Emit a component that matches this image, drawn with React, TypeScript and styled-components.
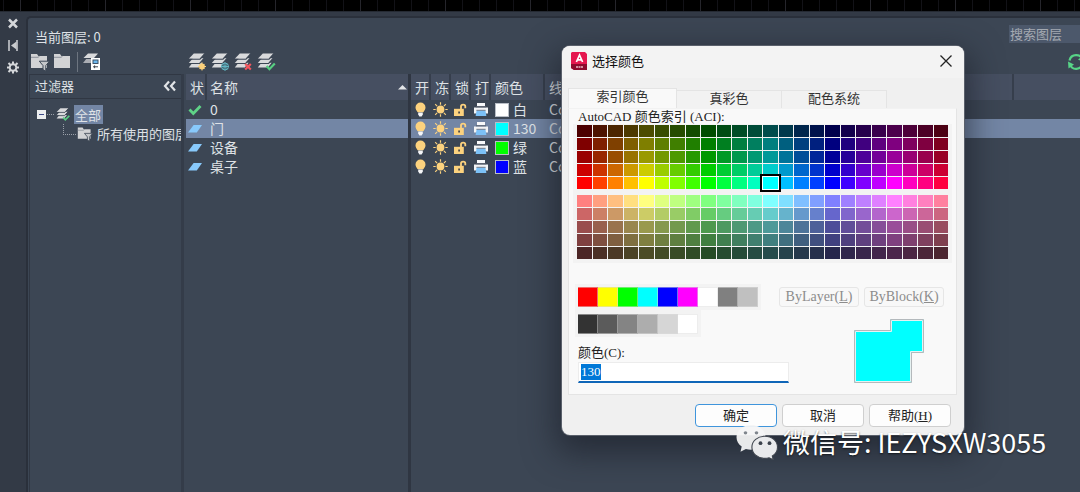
import React, { useEffect, useRef } from "react";
import styled, { createGlobalStyle } from "styled-components";

const ui = `"Noto Sans CJK SC", "Noto Sans", sans-serif`;
const dialogFont = `"Liberation Serif", "Noto Sans CJK SC", serif`;

const GlobalStyle = createGlobalStyle`
  * { box-sizing: border-box; }
  body { margin: 0; background: #3c4654; font-family: ${ui}; }
  button, input { font-family: inherit; margin: 0; }
  svg { flex: none; }
`;

const Page = styled.div`
  position: relative;
  display: flex;
  flex-direction: column;
  min-height: 100vh;
  overflow: hidden;
  color: #dfe2e6;
`;

const CanvasStrip = styled.div`
  height: 11px;
  background:
    repeating-linear-gradient(90deg, transparent 0 20px, #25252b 20px 21px, transparent 21px 85px),
    repeating-linear-gradient(90deg, transparent 0 3px, #121217 3px 4px, transparent 4px 17px),
    #000;
`;

const Manager = styled.div`
  flex: 1;
  display: flex;
  padding-top: 4px;
  background: #333a46;
  border-top: 1px solid #252a33;
`;

const Rail = styled.nav`
  width: 26px;
  display: flex;
  flex-direction: column;
  align-items: center;
  gap: 8px;
`;

const IconButton = styled.button`
  display: flex;
  align-items: center;
  justify-content: center;
  padding: 0;
  border: 0;
  background: none;
  color: inherit;
  flex: none;
`;

const Main = styled.main`
  flex: 1;
  min-width: 0;
  display: flex;
  flex-direction: column;
  background: #3c4654;
  border: solid #2a303b;
  border-width: 2px 0 0 2px;
  border-top-left-radius: 5px;
`;

const TitleRow = styled.div`
  display: flex;
  justify-content: space-between;
  align-items: center;
  height: 32px;
  padding-left: 7px;
`;

const CurrentLayer = styled.div`
  padding-top: 6px;
  font-size: 13px;
  line-height: 20px;
`;

const Search = styled.input`
  width: 71px;
  height: 18px;
  padding: 0 1px 2px;
  border: 0;
  border-radius: 0;
  background: #4c586b;
  font-size: 13px;
  color: #dfe2e6;
  &::placeholder { color: #a4a9b1; opacity: 1; }
`;

const ToolRow = styled.div`
  display: flex;
  align-items: center;
  height: 24px;
  margin-right: -5px;
`;

const FilterTools = styled.div`
  display: flex;
  align-items: center;
  gap: 3px;
  width: 160px;
  padding-left: 2px;
`;

const ToolDivider = styled.span`
  width: 1px;
  height: 20px;
  margin: 0 1px;
  background: #6d7580;
`;

const LayerTools = styled.div`
  flex: 1;
  display: flex;
  gap: 3px;
`;

const Columns = styled.div`
  flex: 1;
  display: flex;
  min-height: 0;
`;

const FilterPanel = styled.aside`
  width: 156px;
  flex: none;
  padding-left: 1px;
  border-right: 3px solid #343c49;
  margin-right: 2px;
  overflow: hidden;
`;

const FilterHeader = styled.div`
  display: flex;
  align-items: center;
  justify-content: space-between;
  height: 25px;
  padding: 0 5px 2px;
  border: solid #303743;
  border-width: 1px 0 1px 1px;
  font-size: 13px;
`;

const Tree = styled.ul`
  list-style: none;
  margin: 0;
  padding: 6px 0 0;
  height: 100%;
  border-left: 1px solid #303743;
  font-size: 13px;
`;

const TreeItem = styled.li`
  display: flex;
  align-items: center;
  height: 19px;
  padding-left: 7px;
  white-space: nowrap;
`;

const TreeLabel = styled.span<{ $selected?: boolean }>`
  flex: none;
  margin-left: 3px;
  padding: 0 2px 0 1px;
  line-height: 19px;
  background: ${(p) => (p.$selected ? "#7386a5" : "transparent")};
`;

const TableArea = styled.section`
  flex: 1;
  min-width: 0;
  background: linear-gradient(#2f3642, #2f3642) 222px 0 / 3px 100% no-repeat;
`;

const Table = styled.table`
  width: 100%;
  table-layout: fixed;
  border-collapse: separate;
  border-spacing: 0;
  font-size: 14px;
`;

const Th = styled.th<{ $wide?: boolean }>`
  height: 26px;
  padding: 0 0 1px ${(p) => (p.$wide ? "3px" : "4px")};
  overflow: hidden;
  background: #464f61;
  border-right: ${(p) => (p.$wide ? "3px solid #2f3642" : "2px solid #363e4c")};
  font-weight: 400;
  text-align: left;
  white-space: nowrap;
  &:last-child { border-right: 0; }
`;

const HeadFlex = styled.div`
  display: flex;
  align-items: center;
  justify-content: space-between;
  padding-right: 1px;
  line-height: 20px;
`;

const Row = styled.tr<{ $selected?: boolean }>`
  background: ${(p) => (p.$selected ? "#7386a5" : "transparent")};
`;

const Td = styled.td<{ $wide?: boolean; $icon?: boolean }>`
  height: 19px;
  padding: 0 0 0 ${(p) => (p.$icon ? "2px" : p.$wide ? "3px" : "4px")};
  border-right: ${(p) => (p.$wide ? "3px solid #2f3642" : "0")};
  line-height: 19px;
  white-space: nowrap;
  overflow: hidden;
  svg { display: block; }
`;

const ColorCell = styled.span`
  display: flex;
  align-items: center;
  gap: 4px;
`;

const Chip = styled.i<{ $color: string }>`
  width: 14px;
  height: 14px;
  background: ${(p) => p.$color};
  border: 1px solid #b9bec6;
`;

/* ---------- colour dialog ---------- */

const Dialog = styled.div`
  position: absolute;
  left: 562px;
  top: 46px;
  width: 402px;
  padding-bottom: 8px;
  border-radius: 8px;
  background: #f0f0f0;
  box-shadow: 0 0 0 1px #5a606b, 0 12px 32px 6px rgba(24, 26, 36, 0.6);
  color: #222;
  font-family: ${dialogFont};
  font-size: 13px;
`;

const DialogTitle = styled.header`
  display: flex;
  align-items: center;
  height: 32px;
  padding: 0 11px 2px 9px;
  border-radius: 8px 8px 0 0;
  background: #f3f3f3;
  h1 {
    flex: 1;
    margin: 0 0 0 5px;
    font: 400 13px/20px ${ui};
    color: #111;
  }
`;

const Tabs = styled.div`
  display: flex;
  align-items: flex-end;
  height: 30px;
  padding-left: 6px;
`;

const Tab = styled.button<{ $active?: boolean }>`
  width: ${(p) => (p.$active ? "109px" : "105px")};
  height: ${(p) => (p.$active ? "20px" : "18px")};
  padding: 0 0 ${(p) => (p.$active ? "4px" : "2px")};
  border: 1px solid #e4e4e4;
  border-width: 1px 1px 0 ${(p) => (p.$active ? "1px" : "0")};
  background: ${(p) => (p.$active ? "#f9f9f9" : "#f2f2f2")};
  font-size: 13px;
  line-height: 15px;
  color: #333;
`;

const TabPanel = styled.div`
  margin: 0 7px 0 6px;
  padding: 0 8px 10px 9px;
  height: 287px;
  border: 1px solid #e4e4e4;
  border-top-color: #f2f2f2;
  background: #f9f9f9;
`;

const PanelLabel = styled.div`
  height: 15px;
  line-height: 15px;
`;

const Aci = styled.div`
  display: grid;
  gap: 6px;
  margin: 0 -4px 0 -5px;
  padding: 1px 4px 4px;
  background: #f3f3f3;
`;

const Shades = styled.div`
  display: grid;
  grid-template-columns: repeat(24, 1fr);
  grid-auto-rows: 12px;
  gap: 1px;
`;

const Shade = styled.button<{ $color: string; $selected?: boolean }>`
  padding: 0;
  border: 0;
  background: ${(p) => p.$color};
  ${(p) =>
    p.$selected &&
    "position: relative; box-shadow: 0 0 0 1px #fff, 0 0 0 3px #000;"}
`;

const Basics = styled.div`
  display: flex;
  justify-content: space-between;
  align-items: flex-start;
  margin-top: 21px;
`;

const Strips = styled.div`
  display: flex;
  flex-direction: column;
  align-items: flex-start;
`;

const Strip = styled.div`
  display: flex;
  margin-left: -3px;
  padding: 3px 3px 3px;
  background: #f3f3f3;
  & + & { padding-top: 4px; }
`;

const Swatch = styled.button<{ $color: string }>`
  width: 20px;
  height: 20px;
  padding: 0;
  border: 1px solid #d0d0d0;
  border-color: rgba(220, 220, 220, 0.5);
  border-left-width: 0;
  background: ${(p) => p.$color};
`;

const ByButtons = styled.div`
  display: flex;
  gap: 5px;
  padding: 3px 4px 0 0;
`;

const ByButton = styled.button`
  width: 80px;
  height: 20px;
  padding: 0;
  border: 1px solid #e6e6e6;
  border-radius: 3px;
  background: #f8f8f8;
  font-size: 14px;
  line-height: 16px;
  color: #8c8c8c;
`;

const ValueRow = styled.div`
  display: flex;
  justify-content: space-between;
  align-items: flex-end;
  margin-top: -19px;
  padding-right: 23px;
`;

const Field = styled.div`
  display: flex;
  flex-direction: column;
  padding-bottom: 1px;
  label { line-height: 18px; }
  input {
    width: 211px;
    height: 21px;
    padding: 0 0 1px 2px;
    border: 1px solid #ececec;
    border-bottom: 2px solid #0f66b8;
    border-radius: 0;
    background: #fff;
    font-size: 13px;
    line-height: 17px;
    color: #222;
    outline: none;
  }
  input::selection { background: #0078d7; color: #fff; }
`;

const Actions = styled.footer`
  display: flex;
  justify-content: flex-end;
  gap: 5px;
  margin-top: 9px;
  padding-right: 13px;
`;

const Action = styled.button<{ $primary?: boolean }>`
  width: 82px;
  height: 23px;
  padding: 0;
  border: 1px solid ${(p) => (p.$primary ? "#3f95dc" : "#cfcfcf")};
  border-radius: 4px;
  background: #fdfdfd;
  font-size: 13px;
  line-height: 19px;
  color: #222;
`;

const Watermark = styled.div`
  position: absolute;
  left: 735px;
  top: 422px;
  display: flex;
  align-items: center;
  gap: 5px;
  font-size: 27px;
  line-height: 40px;
  color: #fff;
  white-space: nowrap;
  text-shadow: 0 1px 2px rgba(0, 0, 0, 0.6);
`;

/* ---------- icons ---------- */

type Badge = "new" | "frozen" | "delete" | "current";

const StackShape = () => (
  <g fill="#d9dadc">
    <path d="M4.500 10.700H14.600L10.800 15.400H0.800z" />
    <path d="M5 6.300H15.600L11.400 11H0.800z" />
    <path d="M5.800 1.500H16.400L11.800 6.700H0.800z" />
    <path d="M0.500 7.200H12L16.500 2.200M0.500 11.500H11.600L16 6.600" stroke="#3c4654" strokeWidth="1.100" fill="none" />
  </g>
);

const LayersIcon = ({ badge, size = 20 }: { badge: Badge; size?: number }) => (
  <svg width={size} height={size} viewBox="0 0 20 20">
    <StackShape />
    {badge === "new" && (
      <g>
        <circle cx="14" cy="14.500" r="2.900" fill="#fbd07b" />
        <path d="M14 10.500v8M10 14.500h8M11.400 11.900l5.200 5.200M16.600 11.900l-5.200 5.200" stroke="#fbd07b" strokeWidth="1" />
      </g>
    )}
    {badge === "frozen" && (
      <g stroke="#63b6c3" strokeWidth="1" fill="#3c4654">
        <circle cx="14" cy="14.500" r="3.500" />
        <path d="M14 10.500v8M10 14.500h8M11.400 11.900l5.200 5.200M16.600 11.900l-5.200 5.200" />
      </g>
    )}
    {badge === "delete" && (
      <path d="M11.200 12l5.600 5.600M16.800 12l-5.600 5.600" stroke="#f4575f" strokeWidth="2.100" />
    )}
    {badge === "current" && (
      <path d="M9.600 14l2.800 3.200 5.400-5.600" stroke="#57cf82" strokeWidth="2.200" fill="none" />
    )}
  </svg>
);

const FolderIcon = ({ filter, size = 20 }: { filter?: boolean; size?: number }) => (
  <svg width={size} height={size} viewBox="0 0 20 20">
    <path d="M1 2h6l1.400 2H17v12H1z" fill="#d2d3d5" />
    <path d="M1 5.300h7l1.500-1" stroke="#8d929a" fill="none" />
    {filter && (
      <path d="M9.300 9.200h10.200l-3.700 4.400v5.600l-2.800-1.600v-4z" fill="#c5c7ca" stroke="#3c4654" strokeWidth="1" />
    )}
  </svg>
);

const StatesIcon = () => (
  <svg width="20" height="20" viewBox="0 0 20 20">
    <path d="M6 1.500h10l-4 4.500H1.500z" fill="#d9dadc" />
    <path d="M4.200 7H9v4H1z" fill="#aaadb3" />
    <rect x="9" y="6" width="9" height="12" fill="#fff" />
    <rect x="11" y="8" width="5" height="3.500" fill="#6cb8ee" stroke="#3d5268" />
    <path d="M11 14.800h5M12.600 13.400v2.800" stroke="#3f4751" />
  </svg>
);

const CheckIcon = () => (
  <svg width="14" height="12" viewBox="0 0 14 12">
    <path d="M1.500 5.500l3.800 4L12.500 2" stroke="#5fd387" strokeWidth="2.800" fill="none" />
  </svg>
);

const SheetIcon = () => (
  <svg width="14" height="10" viewBox="0 0 14 10">
    <path d="M5.600 1H14L8.800 8.600H0z" fill="#88c9fb" />
  </svg>
);

const BulbIcon = () => (
  <svg width="15" height="15" viewBox="0 0 15 15">
    <path d="M7.500.5a5 5 0 0 0-5 5c0 2 1.200 2.900 2.100 4.700h5.800c.9-1.800 2.100-2.700 2.100-4.700a5 5 0 0 0-5-5z" fill="#fcd27e" />
    <path d="M5.200 10.600h4.600v2l-1.200 1.800H6.400l-1.200-1.800z" fill="#f5f6f8" />
  </svg>
);

const SunIcon = () => (
  <svg width="15" height="15" viewBox="0 0 15 15">
    <circle cx="7.500" cy="7.500" r="3.900" fill="#fcd27e" />
    <path d="M7.500.3v2.400M7.500 12.300v2.400M.3 7.500h2.400M12.300 7.500h2.400M2.200 2.200l1.900 1.900M10.900 10.900l1.900 1.900M12.800 2.200l-1.900 1.900M4.100 10.900l-1.900 1.900" stroke="#fcd27e" strokeWidth="1.200" />
  </svg>
);

const LockIcon = () => (
  <svg width="14" height="14" viewBox="0 0 14 14">
    <path d="M8 6V3.500C8 .9 12.300.9 12.300 3.500V5.200" stroke="#fcd27e" strokeWidth="1.800" fill="none" />
    <path d="M1 5.800h9.800V13H1z" fill="#fcd27e" />
    <path d="M5.200 8.400h1.800v2.200H5.200z" fill="#4d4a48" />
  </svg>
);

const PrinterIcon = () => (
  <svg width="16" height="15" viewBox="0 0 16 15">
    <path d="M4 1h8v3.200H4z" fill="#f8f9fb" />
    <path d="M1 5.500h14v6H1z" fill="#f3f4f6" />
    <path d="M3 4.800h10" stroke="#59606d" />
    <path d="M3.600 8.500h8.800l1 5.500H2.600z" fill="#7cc1f7" />
    <path d="M3.400 8.300h9.200" stroke="#59606d" strokeWidth=".8" />
  </svg>
);

const WeChatIcon = () => (
  <svg width="43" height="36" viewBox="0 0 42 36">
    <path d="M15.500 1C7.200 1 1 6.400 1 13.200c0 4 2 7.200 5.200 9.400L5 27.800l5.400-2.900c1.600.5 3.400.8 5.100.8 8.300 0 14.500-5.600 14.500-12.500S23.800 1 15.500 1z" fill="#f4f4f5" fillOpacity=".94" />
    <ellipse cx="10" cy="8.800" rx="1.800" ry="1.600" fill="#7f858d" />
    <ellipse cx="21" cy="8.800" rx="1.800" ry="1.600" fill="#7f858d" />
    <path d="M29.300 12.200c-7.200 0-12.900 4.800-12.900 11s5.700 11.200 12.900 11.200c1.500 0 3-.2 4.300-.6l4.200 2-1-3.800c3.200-2 5.200-5.200 5.200-8.800 0-6.200-5.500-11-12.700-11z" fill="#e9eaec" stroke="#40464f" strokeWidth="1.100" />
    <circle cx="25" cy="19.200" r="1.900" fill="#3c424c" />
    <circle cx="34" cy="19.200" r="1.900" fill="#3c424c" />
  </svg>
);

/* ---------- data ---------- */

const layers = [
  { name: "0", color: "#ffffff", label: "白", current: true },
  { name: "门", color: "#00ffff", label: "130", selected: true },
  { name: "设备", color: "#00ff00", label: "绿" },
  { name: "桌子", color: "#0000ff", label: "蓝" },
];

const columnWidths = [21, 204, 20, 20, 20, 20, 54, 469];

const aciColor = (hueIndex: number, value: number, tint: boolean) => {
  const h = (hueIndex * 15) / 60;
  const channel = (n: number) => {
    const k = (n + h) % 6;
    const c = 1 - Math.max(0, Math.min(k, 4 - k, 1));
    return Math.round(value * (tint ? 0.5 + c / 2 : c));
  };
  return `rgb(${channel(5)}, ${channel(3)}, ${channel(1)})`;
};

const pureValues = [76, 127, 153, 204, 255];
const tintValues = [255, 204, 153, 127, 76];
const hues = Array.from({ length: 24 }, (_, i) => i);

const basicColors = ["#ff0000", "#ffff00", "#00ff00", "#00ffff", "#0000ff", "#ff00ff", "#ffffff", "#808080", "#c0c0c0"];
const greys = ["#333333", "#5b5b5b", "#848484", "#adadad", "#d6d6d6", "#ffffff"];

const ShadeGrid = ({ values, tint = false }: { values: number[]; tint?: boolean }) => (
  <Shades>
    {values.map((v) =>
      hues.map((h) => {
        const color = aciColor(h, v, tint);
        return (
          <Shade key={`${v}-${h}`} type="button" aria-label={color} $color={color} $selected={!tint && v === 255 && h === 12} />
        );
      })
    )}
  </Shades>
);

const ColorDialog = () => {
  const field = useRef<HTMLInputElement>(null);
  useEffect(() => {
    field.current?.focus();
    field.current?.select();
  }, []);
  return (
    <Dialog role="dialog" aria-labelledby="dialog-title">
      <DialogTitle>
        <svg width="16" height="18" viewBox="0 0 16 18">
          <path d="M1 0h13l2 2v16H3l-3-2V1z" fill="#e5174f" />
          <path d="M0 12h16v6H3l-3-2z" fill="#8c0a2d" />
          <path d="M5.400 10L8.500 3L11.600 10M6.500 7.900h4" stroke="#fff" strokeWidth="1.700" fill="none" />
          <path d="M5 15h7" stroke="#e9b9c6" strokeWidth="1.600" strokeDasharray="2 .5" />
        </svg>
        <h1 id="dialog-title">选择颜色</h1>
        <IconButton type="button" aria-label="关闭">
          <svg width="14" height="14" viewBox="0 0 14 14">
            <path d="M1.500 1.500l11 11M12.500 1.500l-11 11" stroke="#222" strokeWidth="1.300" />
          </svg>
        </IconButton>
      </DialogTitle>
      <Tabs role="tablist">
        <Tab type="button" role="tab" aria-selected $active>索引颜色</Tab>
        <Tab type="button" role="tab">真彩色</Tab>
        <Tab type="button" role="tab">配色系统</Tab>
      </Tabs>
      <TabPanel role="tabpanel">
        <PanelLabel>AutoCAD 颜色索引 (ACI):</PanelLabel>
        <Aci>
          <ShadeGrid values={pureValues} />
          <ShadeGrid values={tintValues} tint />
        </Aci>
        <Basics>
          <Strips>
            <Strip>
              {basicColors.map((c) => <Swatch key={c} type="button" aria-label={c} $color={c} />)}
            </Strip>
            <Strip>
              {greys.map((c) => <Swatch key={c} type="button" aria-label={c} $color={c} />)}
            </Strip>
          </Strips>
          <ByButtons>
            <ByButton type="button" disabled>ByLayer(<u>L</u>)</ByButton>
            <ByButton type="button" disabled>ByBlock(<u>K</u>)</ByButton>
          </ByButtons>
        </Basics>
        <ValueRow>
          <Field>
            <label htmlFor="aci-value">颜色(C):</label>
            <input id="aci-value" ref={field} defaultValue="130" />
          </Field>
          <svg width="72" height="66" viewBox="0 0 72 66">
            <path d="M1.500 12.500h36V1.500h33v33H58.500v30H1.500z" fill="#00ffff" stroke="#b4b9bc" />
            <path d="M2.500 13.500h36V2.500h31v31H57.500v30H2.500z" fill="none" stroke="#e6f2f2" />
          </svg>
        </ValueRow>
      </TabPanel>
      <Actions>
        <Action type="button" $primary>确定</Action>
        <Action type="button">取消</Action>
        <Action type="button">帮助(<u>H</u>)</Action>
      </Actions>
    </Dialog>
  );
};

export default function App() {
  return (
    <Page>
      <GlobalStyle />
      <CanvasStrip />
      <Manager>
        <Rail>
          <IconButton type="button" aria-label="关闭面板">
            <svg width="14" height="14" viewBox="0 0 14 14">
              <path d="M3 3.500l8 8M11 3.500l-8 8" stroke="#d5d7da" strokeWidth="2.500" />
            </svg>
          </IconButton>
          <IconButton type="button" aria-label="自动隐藏">
            <svg width="14" height="14" viewBox="0 0 14 14">
              <path d="M3 2v11M11 2v11" stroke="#b6b9be" strokeWidth="1.800" />
              <path d="M10.500 3.500v8L5 7.500z" fill="#c8cacd" />
            </svg>
          </IconButton>
          <IconButton type="button" aria-label="特性">
            <svg width="14" height="14" viewBox="0 0 14 14">
              <circle cx="7" cy="7.500" r="3.300" stroke="#d5d7da" strokeWidth="1.900" fill="none" />
              <path d="M7 1.500V4M7 11v2.500M1 7.500h2.500M10.500 7.500H13M2.500 3l2 2M9.500 10l2 2M11.500 3l-2 2M4.500 10l-2 2" stroke="#d5d7da" strokeWidth="2" />
            </svg>
          </IconButton>
        </Rail>
        <Main>
          <TitleRow>
            <CurrentLayer>当前图层: 0</CurrentLayer>
            <Search aria-label="搜索图层" placeholder="搜索图层" />
          </TitleRow>
          <ToolRow>
            <FilterTools>
              <IconButton type="button" aria-label="新建特性过滤器"><FolderIcon filter /></IconButton>
              <IconButton type="button" aria-label="新建组过滤器"><FolderIcon /></IconButton>
              <ToolDivider />
              <IconButton type="button" aria-label="图层状态管理器"><StatesIcon /></IconButton>
            </FilterTools>
            <LayerTools>
              <IconButton type="button" aria-label="新建图层"><LayersIcon badge="new" /></IconButton>
              <IconButton type="button" aria-label="冻结的新图层"><LayersIcon badge="frozen" /></IconButton>
              <IconButton type="button" aria-label="删除图层"><LayersIcon badge="delete" /></IconButton>
              <IconButton type="button" aria-label="置为当前"><LayersIcon badge="current" /></IconButton>
            </LayerTools>
            <IconButton type="button" aria-label="刷新">
              <svg width="18" height="18" viewBox="0 0 18 18">
                <path d="M2.500 7.500C4 .5 14 .5 15.500 7M15.500 10.500C14 17.500 5 17.500 3 11.500" stroke="#57d487" strokeWidth="2.200" fill="none" />
                <path d="M1 8.500l6 3-5.500 4zM17 9.500l-6-3 5.500-4z" fill="#57d487" />
              </svg>
            </IconButton>
          </ToolRow>
          <Columns>
            <FilterPanel>
              <FilterHeader>
                过滤器
                <IconButton type="button" aria-label="折叠">
                  <svg width="13" height="12" viewBox="0 0 13 12">
                    <path d="M6 1.500L2 6L6 10.500M12 1.500L8 6L12 10.500" stroke="#e2e4e7" strokeWidth="2.200" fill="none" />
                  </svg>
                </IconButton>
              </FilterHeader>
              <Tree>
                <TreeItem>
                  <svg width="19" height="19" viewBox="0 0 19 19">
                    <rect x="0" y="5" width="9" height="9" fill="#eceef0" />
                    <path d="M2 9.500h5" stroke="#3d4a8a" />
                    <path d="M10 9.500h7" stroke="#9aa0a9" strokeDasharray="1 1" />
                  </svg>
                  <LayersIcon badge="current" size={15} />
                  <TreeLabel $selected>全部</TreeLabel>
                </TreeItem>
                <TreeItem>
                  <svg width="40" height="19" viewBox="0 0 40 19">
                    <path d="M26.500 0v10M26 10.500h13" stroke="#9aa0a9" strokeDasharray="1 1" fill="none" />
                  </svg>
                  <FolderIcon filter size={16} />
                  <TreeLabel>所有使用的图层</TreeLabel>
                </TreeItem>
              </Tree>
            </FilterPanel>
            <TableArea>
              <Table>
                <colgroup>
                  {columnWidths.map((w, i) => <col key={i} width={w} />)}
                  <col />
                </colgroup>
                <thead>
                  <tr>
                    <Th>状</Th>
                    <Th $wide>
                      <HeadFlex>
                        名称
                        <svg width="9" height="6" viewBox="0 0 9 6"><path d="M0 5.500L4.500 1L9 5.500z" fill="#e3e5e8" /></svg>
                      </HeadFlex>
                    </Th>
                    <Th>开</Th>
                    <Th>冻</Th>
                    <Th>锁</Th>
                    <Th>打</Th>
                    <Th>颜色</Th>
                    <Th>线</Th>
                    <Th />
                  </tr>
                </thead>
                <tbody>
                  {layers.map((l) => (
                    <Row key={l.name} $selected={l.selected}>
                      <Td $icon>{l.current ? <CheckIcon /> : <SheetIcon />}</Td>
                      <Td $wide>{l.name}</Td>
                      <Td $icon><BulbIcon /></Td>
                      <Td $icon><SunIcon /></Td>
                      <Td $icon><LockIcon /></Td>
                      <Td $icon><PrinterIcon /></Td>
                      <Td>
                        <ColorCell><Chip $color={l.color} />{l.label}</ColorCell>
                      </Td>
                      <Td>Con</Td>
                      <Td />
                    </Row>
                  ))}
                </tbody>
              </Table>
            </TableArea>
          </Columns>
        </Main>
      </Manager>
      <ColorDialog />
      <Watermark>
        <WeChatIcon />
        微信号: IEZYSXW3055
      </Watermark>
    </Page>
  );
}
